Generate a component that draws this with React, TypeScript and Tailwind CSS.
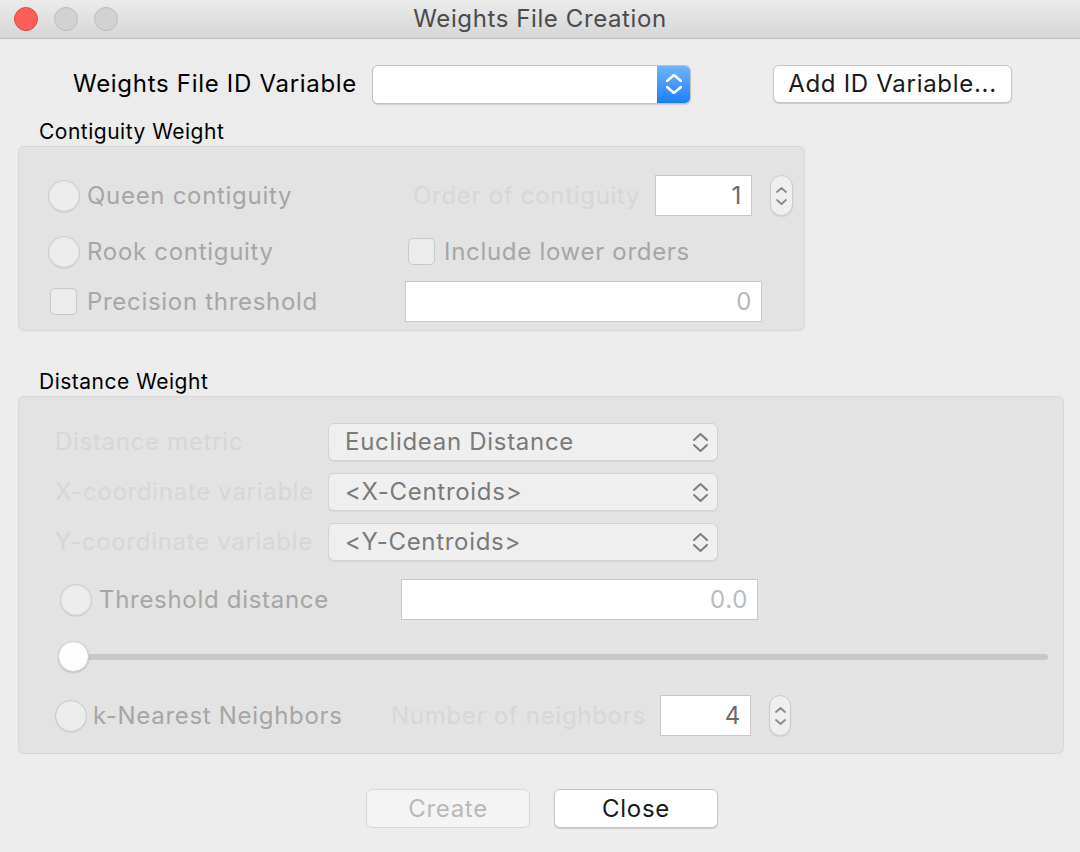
import React from 'react';

// pair of up / down chevrons used by pop-ups and steppers
const Chevrons: React.FC<{ cw: number; ch: number; gap: number; color: string; stroke?: number }> = ({ cw, ch, gap, color, stroke = 2 }) => {
  const w = cw + 2;
  const h = ch * 2 + gap + 2;
  return (
    <svg width={w} height={h} viewBox={`0 0 ${w} ${h}`} fill="none">
      <path d={`M1 ${1 + ch} L${w / 2} 1 L${w - 1} ${1 + ch}`} stroke={color} strokeWidth={stroke} strokeLinecap="round" strokeLinejoin="round" />
      <path d={`M1 ${h - 1 - ch} L${w / 2} ${h - 1} L${w - 1} ${h - 1 - ch}`} stroke={color} strokeWidth={stroke} strokeLinecap="round" strokeLinejoin="round" />
    </svg>
  );
};

const Radio = () => (
  <div className="w-[32px] h-[32px] shrink-0 rounded-full border border-[#c9c9c9] bg-[#ececec] shadow-[0_1px_1px_rgba(0,0,0,0.06)]" />
);

const Check = () => (
  <div className="w-[27px] h-[27px] shrink-0 rounded-[5px] border border-[#c9c9c9] bg-[#ececec]" />
);

const Stepper: React.FC<{ w: number }> = ({ w }) => (
  <div
    className="h-[41px] rounded-full border border-[#cbcbcb] bg-[#efefef] flex items-center justify-center shadow-[0_1px_1px_rgba(0,0,0,0.08)]"
    style={{ width: w }}
  >
    <Chevrons cw={9} ch={4} gap={8} color="#8a8a8a" stroke={1.8} />
  </div>
);

const Select: React.FC<{ label: string }> = ({ label }) => (
  <div className="w-[390px] h-[38px] rounded-[6px] border border-[#d2d2d2] bg-[#efefef] flex items-center justify-between pl-[16px] pr-[9px] text-[24px] tracking-[0.7px] text-[#7a7a7a] shadow-[0_1px_1px_rgba(0,0,0,0.05)]">
    <span>{label}</span>
    <Chevrons cw={13} ch={6} gap={5} color="#7d7d7d" stroke={2} />
  </div>
);

const Field: React.FC<{ w: number; value: string; color: string }> = ({ w, value, color }) => (
  <div
    className="h-[41px] bg-white border border-[#c8c8c8] flex items-center justify-end pr-[9px] text-[24px]"
    style={{ width: w, color }}
  >
    {value}
  </div>
);

export default function App() {
  return (
    <div className="w-[1080px] h-[852px] bg-[#ececec] overflow-hidden font-['Inter','Liberation_Sans',sans-serif] text-black">
      {/* title bar */}
      <div className="h-[39px] grid grid-cols-[1fr_auto_1fr] items-center bg-gradient-to-b from-[#ebebeb] to-[#d6d6d6] border-b border-[#bdbdbd]">
        <div className="flex items-center gap-[16px] pl-[14px]">
          <div className="w-[24px] h-[24px] rounded-full bg-[#fc5f57] border border-[#df4a42]" />
          <div className="w-[24px] h-[24px] rounded-full bg-[#d2d2d2] border border-[#bcbcbc]" />
          <div className="w-[24px] h-[24px] rounded-full bg-[#d2d2d2] border border-[#bcbcbc]" />
        </div>
        <div className="text-[24px] tracking-[0.6px] text-[#4b4b4b]">Weights File Creation</div>
        <div />
      </div>

      {/* id variable row */}
      <div className="mt-[25px] h-[40px] flex items-center pl-[73px] text-[24px] tracking-[0.7px]">
        <div className="w-[299px]">Weights File ID Variable</div>
        <div className="w-[319px] h-[39px] flex rounded-[6px] border border-[#c2c2c2] bg-white shadow-[0_1px_1px_rgba(0,0,0,0.12)] overflow-hidden">
          <div className="flex-1" />
          <div className="w-[33px] bg-gradient-to-b from-[#6db4fb] to-[#1a7df6] flex items-center justify-center">
            <Chevrons cw={14} ch={6} gap={6} color="#ffffff" stroke={2.4} />
          </div>
        </div>
        <div className="ml-[82px] w-[239px] h-[38px] rounded-[6px] border border-[#c6c6c6] bg-white shadow-[0_1px_1px_rgba(0,0,0,0.15)] flex items-center justify-center text-[#1a1a1a]">
          Add ID Variable...
        </div>
      </div>

      {/* contiguity */}
      <div className="mt-[16px] h-[24px] pl-[39px] text-[21px] tracking-[0.5px] leading-[24px]">Contiguity Weight</div>
      <div className="mt-[2px] ml-[18px] w-[787px] h-[185px] rounded-[6px] border border-[#d8d8d8] bg-[#e3e3e3] pt-[28px] pl-[29px] text-[24px] tracking-[0.7px]">
        <div className="h-[41px] flex items-center">
          <div className="w-[365px] flex items-center">
            <Radio />
            <span className="ml-[7px] text-[#a6a6a6]">Queen contiguity</span>
          </div>
          <div className="w-[242px] text-[#d7d7d7]">Order of contiguity</div>
          <Field w={97} value="1" color="#6a6a6a" />
          <div className="ml-[18px]">
            <Stepper w={23} />
          </div>
        </div>
        <div className="mt-[15px] h-[41px] flex items-center">
          <div className="w-[360px] flex items-center">
            <Radio />
            <span className="ml-[7px] text-[#a6a6a6]">Rook contiguity</span>
          </div>
          <Check />
          <span className="ml-[9px] text-[#a6a6a6]">Include lower orders</span>
        </div>
        <div className="mt-[9px] h-[41px] flex items-center">
          <div className="w-[357px] flex items-center">
            <div className="ml-[2px]">
              <Check />
            </div>
            <span className="ml-[10px] text-[#a6a6a6]">Precision threshold</span>
          </div>
          <Field w={357} value="0" color="#b8b8b8" />
        </div>
      </div>

      {/* distance */}
      <div className="mt-[39px] h-[24px] pl-[39px] text-[21px] tracking-[0.5px] leading-[24px]">Distance Weight</div>
      <div className="mt-[2px] ml-[18px] w-[1046px] h-[358px] rounded-[6px] border border-[#d8d8d8] bg-[#e3e3e3] pt-[26px] pl-[36px] text-[24px] tracking-[0.7px]">
        <div className="flex flex-col gap-[12px]">
          {[
            ['Distance metric', 'Euclidean Distance'],
            ['X-coordinate variable', '<X-Centroids>'],
            ['Y-coordinate variable', '<Y-Centroids>'],
          ].map(([l, v]) => (
            <div key={l} className="h-[38px] flex items-center">
              <div className="w-[273px] text-[#d7d7d7]">{l}</div>
              <Select label={v} />
            </div>
          ))}
        </div>
        <div className="mt-[18px] h-[41px] flex items-center">
          <div className="w-[346px] flex items-center pl-[5px]">
            <Radio />
            <span className="ml-[7px] text-[#a6a6a6]">Threshold distance</span>
          </div>
          <Field w={357} value="0.0" color="#bcbcbc" />
        </div>
        <div className="mt-[21px] ml-[3px] w-[990px] h-[31px] relative flex items-center">
          <div className="ml-[15px] flex-1 h-[6px] rounded-full bg-[#c8c8c8]" />
          <div className="absolute left-0 top-0 w-[31px] h-[31px] rounded-full bg-[#fdfdfd] border border-[#d0d0d0] shadow-[0_1px_2px_rgba(0,0,0,0.15)]" />
        </div>
        <div className="mt-[23px] h-[41px] flex items-center">
          <div className="w-[336px] flex items-center">
            <Radio />
            <span className="ml-[6px] text-[#a6a6a6]">k-Nearest Neighbors</span>
          </div>
          <div className="w-[269px] text-[#d7d7d7]">Number of neighbors</div>
          <Field w={91} value="4" color="#6a6a6a" />
          <div className="ml-[18px]">
            <Stepper w={22} />
          </div>
        </div>
      </div>

      {/* buttons */}
      <div className="mt-[35px] flex justify-center gap-[24px] pl-[4px] text-[24px] tracking-[0.7px]">
        <div className="w-[164px] h-[39px] rounded-[6px] border border-[#d6d6d6] bg-[#f4f4f4] flex items-center justify-center text-[#b9b9b9]">
          Create
        </div>
        <div className="w-[164px] h-[39px] rounded-[6px] border border-[#c6c6c6] bg-white shadow-[0_1px_1px_rgba(0,0,0,0.15)] flex items-center justify-center text-[#1a1a1a]">
          Close
        </div>
      </div>
    </div>
  );
}
